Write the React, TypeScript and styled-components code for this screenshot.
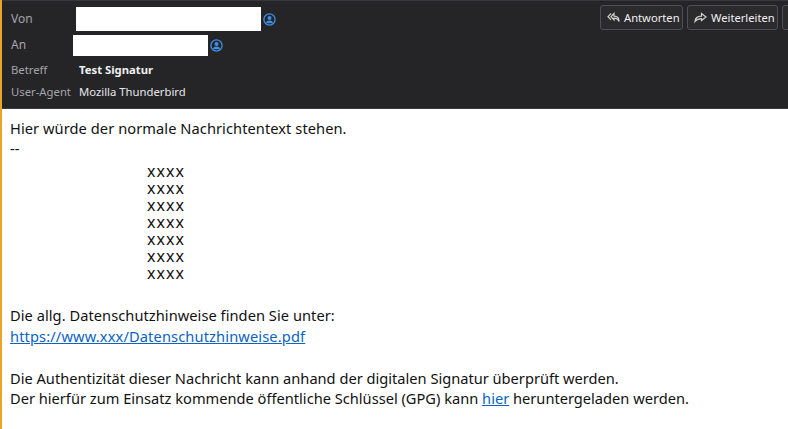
import styled, { createGlobalStyle } from 'styled-components';

const GlobalStyle = createGlobalStyle`
  html, body {
    margin: 0;
    padding: 0;
    background: #ffffff;
    overflow: hidden;
  }
`;

const signatureText = ['xxxx', 'xxxx', 'xxxx', 'xxxx', 'xxxx', 'xxxx', 'xxxx'].join('\n');

function ContactIcon() {
  return (
    <svg width="13" height="13" viewBox="0 0 13 13" fill="none">
      <circle cx="6.5" cy="6.5" r="5.6" stroke="#3d8fe6" strokeWidth="1.3" />
      <circle cx="6.5" cy="5" r="2" fill="#3d8fe6" />
      <path d="M2.9 10.2c.4-2 1.800-2.700 3.600-2.700s3.200.7 3.600 2.700" fill="#3d8fe6" />
    </svg>
  );
}

function ReplyIcon() {
  return (
    <svg width="13" height="12" viewBox="0 0 13 12" fill="none" stroke="#d0d0d2" strokeWidth="1.2">
      <path d="M4 1.500 1 4.700l3 3.200" />
      <path d="M7 1.500 4 4.700l3 3.200V6.200c2.400 0 4 .8 5 3.300.2-3.400-1.600-5.400-5-5.400z" />
    </svg>
  );
}

function ForwardIcon() {
  return (
    <svg width="13" height="12" viewBox="0 0 13 12" fill="none" stroke="#d0d0d2" strokeWidth="1.2">
      <path d="M7.500 1.500 12 5 7.500 8.500V6.700c-2.600 0-4.800.5-6.500 2.800.2-3.200 2.600-5.200 6.500-5.300z" />
    </svg>
  );
}

export default function App() {
  return (
    <>
      <GlobalStyle />
      <Window>
        <Header>
          <Fields>
            <AddressRow $height={24} $top={4}>
              <AddressLabel>Von</AddressLabel>
              <Redacted $width={185} $height={24} $gap={63} />
              <ContactIcon />
            </AddressRow>
            <AddressRow $height={21} $top={4}>
              <AddressLabel>An</AddressLabel>
              <Redacted $width={135} $height={21} $gap={60} />
              <ContactIcon />
            </AddressRow>
            <TextRow $top={3}>
              <FieldLabel>Betreff</FieldLabel>
              <Subject>Test Signatur</Subject>
            </TextRow>
            <TextRow $top={2}>
              <FieldLabel>User-Agent</FieldLabel>
              <FieldValue>Mozilla Thunderbird</FieldValue>
            </TextRow>
          </Fields>
          <Actions>
            <ActionButton $width={83}>
              <ReplyIcon />
              Antworten
            </ActionButton>
            <ActionButton $width={91}>
              <ForwardIcon />
              Weiterleiten
            </ActionButton>
            <ActionButton $width={20} />
          </Actions>
        </Header>
        <Message>
          <Line $spacing={0.07}>Hier würde der normale Nachrichtentext stehen.</Line>
          <Line>--</Line>
          <Signature>{signatureText}</Signature>
          <Line $top={23} $spacing={0.05}>Die allg. Datenschutzhinweise finden Sie unter:</Line>
          <Line $top={1} $spacing={0.13}>
            <MailLink href="#">https://www.xxx/Datenschutzhinweise.pdf</MailLink>
          </Line>
          <Line $top={22}>Die Authentizität dieser Nachricht kann anhand der digitalen Signatur überprüft werden.</Line>
          <Line>
            Der hierfür zum Einsatz kommende öffentliche Schlüssel (GPG) kann <MailLink href="#">hier</MailLink>{' '}
            heruntergeladen werden.
          </Line>
        </Message>
      </Window>
    </>
  );
}

const Window = styled.div`
  width: 788px;
  height: 429px;
  box-sizing: border-box;
  border-left: 2px solid #e8a526;
  display: flex;
  flex-direction: column;
  overflow: hidden;
  font-family: 'Noto Sans', 'Open Sans', sans-serif;
`;

const Header = styled.header`
  height: 109px;
  flex: none;
  box-sizing: border-box;
  background: #252528;
  border-top: 1px solid #38383c;
  border-bottom: 1px solid #3c3c40;
  display: flex;
  justify-content: space-between;
  overflow: hidden;
`;

const Fields = styled.div`
  display: flex;
  flex-direction: column;
  padding: 2px 0 0 9px;
`;

const AddressRow = styled.div<{ $height: number; $top: number }>`
  display: flex;
  align-items: center;
  height: ${({ $height }) => $height}px;
  margin-top: ${({ $top }) => $top}px;
  gap: 2px;
`;

const TextRow = styled.div<{ $top: number }>`
  display: grid;
  grid-template-columns: 68px auto;
  align-items: center;
  height: 20px;
  margin-top: ${({ $top }) => $top}px;
`;

const FieldLabel = styled.span`
  font-size: 11.3px;
  color: #a4a4a8;
  white-space: nowrap;
  width: 0;
`;

const AddressLabel = styled(FieldLabel)`
  font-size: 12px;
  padding-bottom: 2px;
`;

const Redacted = styled.div<{ $width: number; $height: number; $gap: number }>`
  width: ${({ $width }) => $width}px;
  height: ${({ $height }) => $height}px;
  margin-left: ${({ $gap }) => $gap}px;
  background: #ffffff;
`;

const Subject = styled.span`
  font-size: 11.3px;
  font-weight: 700;
  color: #f0f0f2;
`;

const FieldValue = styled.span`
  font-size: 11.3px;
  color: #e6e6e8;
`;

const Actions = styled.div`
  display: flex;
  gap: 4px;
  padding: 4px 0 0;
  margin-right: -14px;
  align-items: flex-start;
`;

const ActionButton = styled.button<{ $width: number }>`
  width: ${({ $width }) => $width}px;
  height: 25px;
  box-sizing: border-box;
  padding: 0 0 0 6px;
  background: #2b2b2e;
  border: 1px solid #4f4f53;
  border-radius: 3px;
  color: #f0f0f2;
  font-family: inherit;
  font-size: 11.2px;
  display: flex;
  align-items: center;
  justify-content: flex-start;
  gap: 4px;
`;

const Message = styled.main`
  flex: 1;
  background: #ffffff;
  color: #111111;
  padding: 9px 0 0 8px;
  font-size: 14.63px;
  line-height: 20px;
`;

const Line = styled.div<{ $top?: number; $spacing?: number }>`
  margin-top: ${({ $top }) => $top ?? 0}px;
  letter-spacing: ${({ $spacing }) => $spacing ?? 0}px;
  white-space: nowrap;
`;

const Signature = styled.div`
  padding: 5px 0 0 137px;
  font-size: 16px;
  letter-spacing: 1px;
  line-height: 17px;
  white-space: pre-line;
`;

const MailLink = styled.a`
  color: #0b63c4;
  text-decoration: underline;
`;
